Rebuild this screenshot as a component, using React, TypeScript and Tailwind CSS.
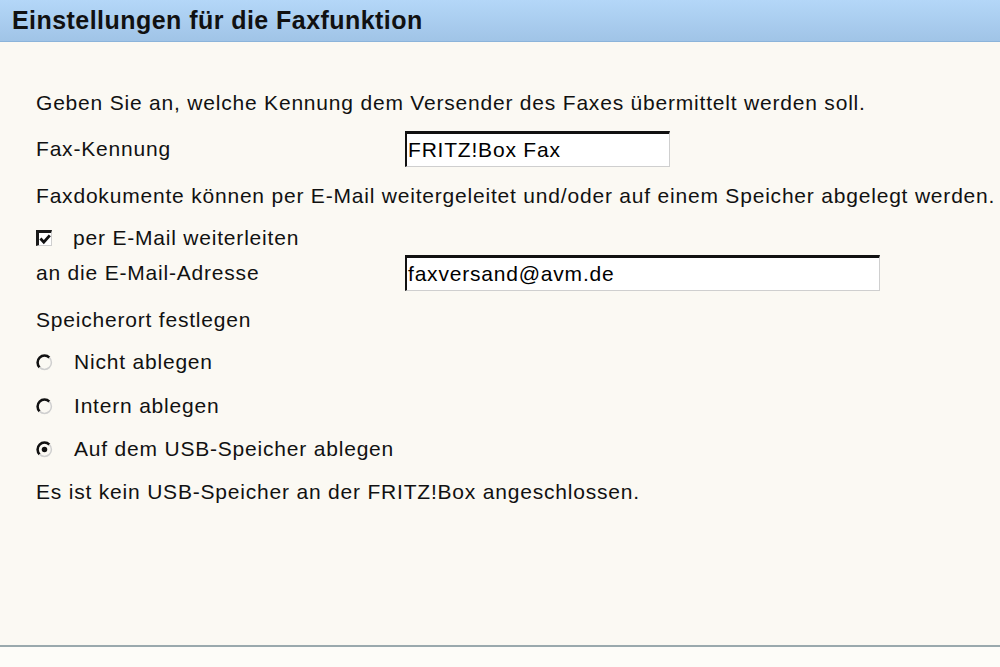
function Checkbox() {
  return (
    <span className="flex h-[16px] w-[16px] shrink-0 items-center justify-center border-l-[3px] border-t-[3px] border-r border-b border-l-[#1a1a1a] border-t-[#1a1a1a] border-r-[#cfcfcf] border-b-[#cfcfcf] bg-white">
      <svg viewBox="0 0 10 10" className="h-[12px] w-[12px]">
        <path d="M1.2 4.6 L4 7.6 L9 2" fill="none" stroke="#111" strokeWidth={2.4} />
      </svg>
    </span>
  );
}

function Radio({ checked }: { checked?: boolean }) {
  return (
    <svg viewBox="0 0 16 16" className="h-[17px] w-[17px] shrink-0">
      <circle cx="8" cy="8" r="6.5" fill="#fbf9f3" />
      <path d="M3.4 12.6 A6.5 6.5 0 0 1 12.6 3.4" fill="none" stroke="#111" strokeWidth={2.4} />
      <path d="M12.6 3.4 A6.5 6.5 0 0 1 3.4 12.6" fill="none" stroke="#cfcfcf" strokeWidth={1.4} />
      {checked && <circle cx="8" cy="8" r="2.6" fill="#111" />}
    </svg>
  );
}

function TextInput({ value, width }: { value: string; width: string }) {
  return (
    <div
      className={`flex h-[36px] items-center border-l-2 border-t-[3px] border-r border-b border-l-[#111] border-t-[#111] border-r-[#cfcfcf] border-b-[#cfcfcf] bg-white pl-[1px] text-black ${width}`}
    >
      {value}
    </div>
  );
}

export default function App() {
  return (
    <div className="flex h-[667px] w-[1000px] flex-col overflow-hidden bg-[#fbf9f3] font-['Liberation_Sans',Arial,sans-serif] text-[21px] tracking-[0.8px] text-[#111]">
      <div className="flex h-[42px] shrink-0 items-center border-b border-[#8cb4da] bg-gradient-to-b from-[#b4d7f8] to-[#a0c4e7] pl-[12px]">
        <h1 className="text-[25px] font-bold tracking-[0.45px] text-[#111]">Einstellungen für die Faxfunktion</h1>
      </div>

      <div className="flex flex-1 flex-col pl-[36px]">
        <p className="mt-[49px] flex h-[24px] items-center whitespace-nowrap">
          Geben Sie an, welche Kennung dem Versender des Faxes übermittelt werden soll.
        </p>

        <div className="mt-[16px] flex h-[36px] items-center">
          <span className="w-[369px]">Fax-Kennung</span>
          <TextInput value="FRITZ!Box Fax" width="w-[265px]" />
        </div>

        <p className="mt-[17px] flex h-[24px] items-center whitespace-nowrap">
          Faxdokumente können per E-Mail weitergeleitet und/oder auf einem Speicher abgelegt werden.
        </p>

        <label className="mt-[18px] flex h-[24px] items-center">
          <Checkbox />
          <span className="ml-[21px]">per E-Mail weiterleiten</span>
        </label>

        <div className="mt-[5px] flex h-[36px] items-center">
          <span className="w-[369px]">an die E-Mail-Adresse</span>
          <TextInput value="faxversand@avm.de" width="w-[475px]" />
        </div>

        <p className="mt-[17px] flex h-[24px] items-center">Speicherort festlegen</p>

        <label className="mt-[18px] flex h-[24px] items-center">
          <Radio />
          <span className="ml-[21px]">Nicht ablegen</span>
        </label>
        <label className="mt-[20px] flex h-[24px] items-center">
          <Radio />
          <span className="ml-[21px]">Intern ablegen</span>
        </label>
        <label className="mt-[19px] flex h-[24px] items-center">
          <Radio checked />
          <span className="ml-[21px]">Auf dem USB-Speicher ablegen</span>
        </label>

        <p className="mt-[19px] flex h-[24px] items-center whitespace-nowrap">
          Es ist kein USB-Speicher an der FRITZ!Box angeschlossen.
        </p>
      </div>

      <div className="h-[2px] shrink-0 bg-[#9aa9ad]" />
      <div className="h-[20px] shrink-0 bg-[#fdfcf8]" />
    </div>
  );
}
